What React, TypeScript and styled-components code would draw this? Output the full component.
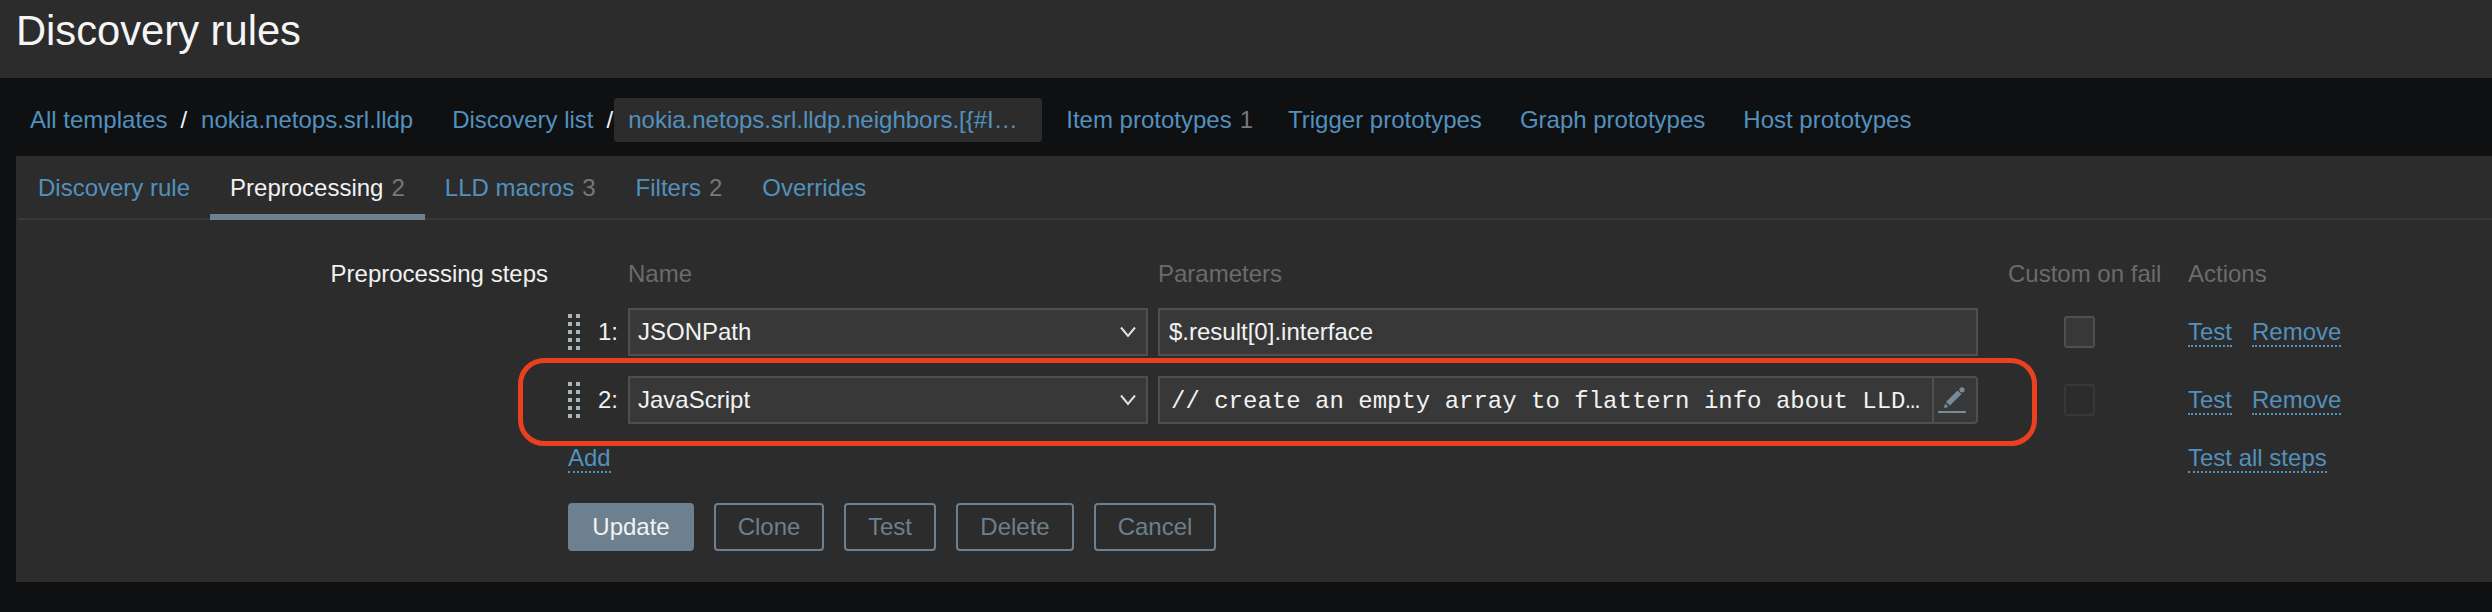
import React from "react";
import styled, { createGlobalStyle } from "styled-components";

const GlobalStyle = createGlobalStyle`
  html, body {
    margin: 0;
    padding: 0;
    background: #0e1012;
    overflow: hidden;
  }
  body {
    font-family: "Liberation Sans", Arial, sans-serif;
    font-size: 24px;
    color: #f2f2f2;
  }
`;

const Page = styled.div`
  width: 2492px;
  height: 612px;
  display: flex;
  flex-direction: column;
`;

const Header = styled.header`
  height: 78px;
  background: #2c2c2c;
  display: flex;
  align-items: flex-start;
  padding-left: 16px;
`;

const Title = styled.h1`
  margin: 6px 0 0;
  font-size: 41.7px;
  line-height: 50px;
  font-weight: 400;
  color: #f5f5f5;
`;

const Nav = styled.nav`
  height: 78px;
  box-sizing: border-box;
  padding: 6px 0 0 30px;
  display: flex;
  align-items: center;
`;

const NavGroup = styled.div<{ $gap?: number }>`
  display: flex;
  align-items: center;
  margin-right: ${(p) => p.$gap ?? 38}px;
`;

const NavLink = styled.a`
  color: #5291be;
  white-space: nowrap;
`;

const Sep = styled.span`
  color: #f2f2f2;
  margin: 0 14px 0 13px;
`;

const CurrentBox = styled.div`
  width: 428px;
  height: 44px;
  box-sizing: border-box;
  margin-left: -13px;
  padding-left: 14px;
  display: flex;
  align-items: center;
  background: #2c2c2c;
  border-radius: 4px;
  color: #5291be;
  white-space: nowrap;
`;

const Count = styled.span`
  color: #787878;
  margin-left: 8px;
`;

const Panel = styled.main`
  height: 426px;
  margin-left: 16px;
  background: #2c2c2c;
`;

const TabBar = styled.div`
  height: 64px;
  box-sizing: border-box;
  margin-left: 2px;
  display: flex;
  border-bottom: 2px solid #383838;
`;

const Tab = styled.div<{ $active?: boolean }>`
  height: 64px;
  box-sizing: border-box;
  padding: 6px 20px 0;
  display: flex;
  align-items: center;
  color: ${(p) => (p.$active ? "#f2f2f2" : "#5291be")};
  border-bottom: 6px solid ${(p) => (p.$active ? "#6c808f" : "transparent")};
  white-space: nowrap;
`;

const FormBody = styled.div`
  display: flex;
  padding-top: 40px;
`;

const FieldLabel = styled.div`
  width: 532px;
  height: 28px;
  line-height: 28px;
  text-align: right;
  color: #f2f2f2;
  white-space: nowrap;
`;

const Fields = styled.div`
  margin-left: 20px;
  display: flex;
  flex-direction: column;
`;

const StepsGrid = styled.div`
  display: grid;
  grid-template-columns: 50px 520px 820px 190px 1fr;
  column-gap: 10px;
  row-gap: 20px;
  align-items: center;
`;

const ColTitle = styled.div<{ $inset?: number }>`
  height: 28px;
  line-height: 28px;
  color: #6b6b6b;
  white-space: nowrap;
  padding-left: ${(p) => p.$inset ?? 0}px;
`;

const StepNumber = styled.div`
  height: 48px;
  display: flex;
  align-items: center;
  justify-content: space-between;
  position: relative;
`;

const Highlight = styled.div`
  position: absolute;
  left: -50px;
  top: -18px;
  width: 1519px;
  height: 88px;
  box-sizing: border-box;
  border: 5px solid #ea401f;
  border-radius: 26px;
  pointer-events: none;
`;

const SelectBox = styled.div`
  height: 48px;
  box-sizing: border-box;
  padding: 0 10px 0 8px;
  display: flex;
  align-items: center;
  justify-content: space-between;
  background: #383838;
  border: 2px solid #4f4f4f;
  color: #f2f2f2;
`;

const TextInput = styled.div`
  height: 48px;
  box-sizing: border-box;
  padding-left: 9px;
  display: flex;
  align-items: center;
  background: #383838;
  border: 2px solid #4f4f4f;
  color: #f2f2f2;
`;

const CodeInput = styled.div`
  height: 48px;
  box-sizing: border-box;
  display: flex;
  align-items: stretch;
  background: #383838;
  border: 2px solid #4f4f4f;
  border-radius: 0 4px 4px 0;
`;

const CodeText = styled.div`
  flex: 1;
  padding: 2px 0 0 11px;
  display: flex;
  align-items: center;
  font-family: "Liberation Mono", "Courier New", monospace;
  color: #f2f2f2;
  white-space: nowrap;
  overflow: hidden;
`;

const EditButton = styled.div`
  width: 44px;
  box-sizing: border-box;
  padding: 2px 0 0 4px;
  border-left: 2px solid #4f4f4f;
  display: flex;
  align-items: center;
`;

const CheckCell = styled.div`
  padding-left: 76px;
  display: flex;
  align-items: center;
`;

const Checkbox = styled.div<{ $disabled?: boolean }>`
  width: 31px;
  height: 32px;
  box-sizing: border-box;
  background: ${(p) => (p.$disabled ? "#2c2c2c" : "#383838")};
  border: 2px solid ${(p) => (p.$disabled ? "#383838" : "#4f4f4f")};
  border-radius: 3px;
`;

const ActionCell = styled.div`
  display: flex;
  align-items: center;
  gap: 20px;
`;

const AddCell = styled.div`
  grid-column: 1 / 5;
`;

const DottedLink = styled.a`
  display: inline-block;
  color: #5291be;
  line-height: 27px;
  border-bottom: 2px dotted #5291be;
  white-space: nowrap;
`;

const ButtonRow = styled.div`
  margin-top: 30px;
  display: flex;
  gap: 20px;
`;

const Button = styled.button<{ $primary?: boolean; $w: number }>`
  width: ${(p) => p.$w}px;
  height: 48px;
  box-sizing: border-box;
  padding: 0;
  font: inherit;
  border: 2px solid #6c808f;
  border-radius: 4px;
  background: ${(p) => (p.$primary ? "#6c808f" : "transparent")};
  color: ${(p) => (p.$primary ? "#f2f2f2" : "#6c808f")};
`;

const DragHandle = () => (
  <svg width="12" height="36" viewBox="0 0 12 36" fill="#a7b6bc">
    {[0, 8, 16, 24, 32].map((y) => (
      <React.Fragment key={y}>
        <rect x="0" y={y} width="4" height="4" />
        <rect x="8" y={y} width="4" height="4" />
      </React.Fragment>
    ))}
  </svg>
);

const Chevron = () => (
  <svg width="16" height="12" viewBox="0 0 16 12" fill="none" stroke="#e0e0e0" strokeWidth="2">
    <path d="M1 1.5 L8 10 L15 1.5" />
  </svg>
);

const Pencil = () => (
  <svg width="28" height="28" viewBox="0 0 28 28" fill="#768d99">
    <path d="M6 21.5 L7 16.5 L10.5 19.5 Z" />
    <path d="M8 15 L19.5 3.5 L23.5 7 L12 18.5 Z" />
    <circle cx="24" cy="2.8" r="2.6" />
    <rect x="0" y="24" width="28" height="2" />
  </svg>
);

const StepHandle = ({ n, children }: { n: number; children?: React.ReactNode }) => (
  <StepNumber>
    <DragHandle />
    <span>{n}:</span>
    {children}
  </StepNumber>
);

const Actions = () => (
  <ActionCell>
    <DottedLink>Test</DottedLink>
    <DottedLink>Remove</DottedLink>
  </ActionCell>
);

export default function App() {
  return (
    <Page>
      <GlobalStyle />
      <Header>
        <Title>Discovery rules</Title>
      </Header>
      <Nav>
        <NavGroup $gap={39}>
          <NavLink>All templates</NavLink>
          <Sep>/</Sep>
          <NavLink>nokia.netops.srl.lldp</NavLink>
        </NavGroup>
        <NavGroup $gap={24}>
          <NavLink>Discovery list</NavLink>
          <Sep>/</Sep>
          <CurrentBox>nokia.netops.srl.lldp.neighbors.[&#123;#I…</CurrentBox>
        </NavGroup>
        <NavGroup $gap={35}>
          <NavLink>Item prototypes</NavLink>
          <Count>1</Count>
        </NavGroup>
        <NavGroup>
          <NavLink>Trigger prototypes</NavLink>
        </NavGroup>
        <NavGroup>
          <NavLink>Graph prototypes</NavLink>
        </NavGroup>
        <NavGroup>
          <NavLink>Host prototypes</NavLink>
        </NavGroup>
      </Nav>
      <Panel>
        <TabBar>
          <Tab>Discovery rule</Tab>
          <Tab $active>
            Preprocessing<Count>2</Count>
          </Tab>
          <Tab>
            LLD macros<Count>3</Count>
          </Tab>
          <Tab>
            Filters<Count>2</Count>
          </Tab>
          <Tab>Overrides</Tab>
        </TabBar>
        <FormBody>
          <FieldLabel>Preprocessing steps</FieldLabel>
          <Fields>
            <StepsGrid>
              <span />
              <ColTitle>Name</ColTitle>
              <ColTitle>Parameters</ColTitle>
              <ColTitle $inset={20}>Custom on fail</ColTitle>
              <ColTitle>Actions</ColTitle>

              <StepHandle n={1} />
              <SelectBox>
                JSONPath
                <Chevron />
              </SelectBox>
              <TextInput>$.result[0].interface</TextInput>
              <CheckCell>
                <Checkbox />
              </CheckCell>
              <Actions />

              <StepHandle n={2}>
                <Highlight />
              </StepHandle>
              <SelectBox>
                JavaScript
                <Chevron />
              </SelectBox>
              <CodeInput>
                <CodeText>// create an empty array to flattern info about LLD…</CodeText>
                <EditButton>
                  <Pencil />
                </EditButton>
              </CodeInput>
              <CheckCell>
                <Checkbox $disabled />
              </CheckCell>
              <Actions />

              <AddCell>
                <DottedLink>Add</DottedLink>
              </AddCell>
              <div>
                <DottedLink>Test all steps</DottedLink>
              </div>
            </StepsGrid>
            <ButtonRow>
              <Button $primary $w={126}>Update</Button>
              <Button $w={110}>Clone</Button>
              <Button $w={92}>Test</Button>
              <Button $w={118}>Delete</Button>
              <Button $w={122}>Cancel</Button>
            </ButtonRow>
          </Fields>
        </FormBody>
      </Panel>
    </Page>
  );
}
